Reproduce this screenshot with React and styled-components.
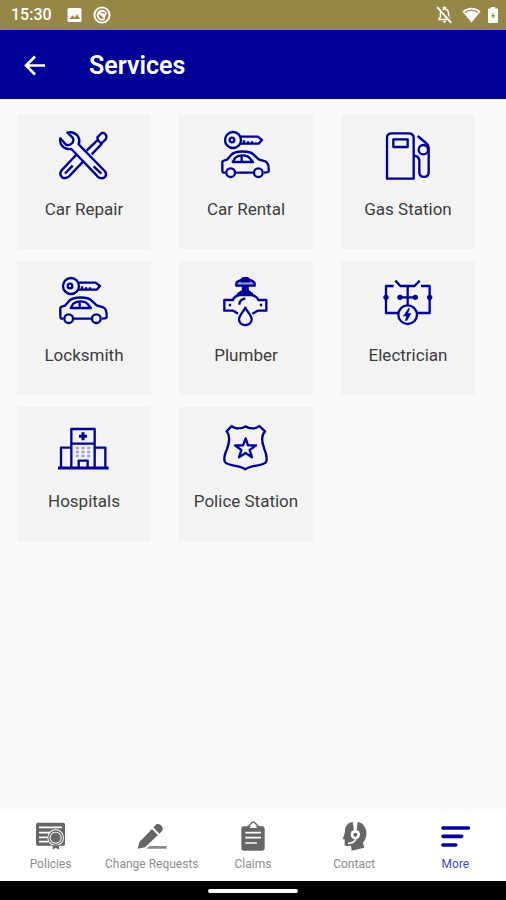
import React from 'react';
import styled, { createGlobalStyle } from 'styled-components';

const NAVY = '#000099';

const services = [
	{ name: 'Car Repair', Icon: RepairIcon },
	{ name: 'Car Rental', Icon: CarKeyIcon },
	{ name: 'Gas Station', Icon: GasIcon },
	{ name: 'Locksmith', Icon: CarKeyIcon },
	{ name: 'Plumber', Icon: PlumberIcon },
	{ name: 'Electrician', Icon: ElectricianIcon },
	{ name: 'Hospitals', Icon: HospitalIcon },
	{ name: 'Police Station', Icon: PoliceIcon },
];

const tabs = [
	{ name: 'Policies', Icon: PoliciesIcon },
	{ name: 'Change Requests', Icon: EditIcon },
	{ name: 'Claims', Icon: ClaimsIcon },
	{ name: 'Contact', Icon: ContactIcon },
	{ name: 'More', Icon: MoreIcon, active: true },
];

export default function App() {
	return (
		<Screen>
			<GlobalStyle />
			<StatusBar>
				<Clock>15:30</Clock>
				<StatusLeft />
				<StatusRight />
			</StatusBar>
			<Header>
				<BackButton aria-label='Back'>
					<svg width='24' height='24' viewBox='0 0 24 24' fill='none' stroke='#fff' strokeWidth='2.6'>
						<path d='M22 11.5H4M12 2.5L3 11.5L12 20.5' />
					</svg>
				</BackButton>
				<Title>Services</Title>
			</Header>
			<Grid>
				{services.map(({ name, Icon }) => (
					<Tile key={name}>
						<Icon />
						<TileLabel>{name}</TileLabel>
					</Tile>
				))}
			</Grid>
			<TabBar>
				{tabs.map(({ name, Icon, active }) => (
					<Tab key={name} href='#' $active={active}>
						<Icon />
						<TabLabel>{name}</TabLabel>
					</Tab>
				))}
			</TabBar>
			<SystemBar>
				<HomePill />
			</SystemBar>
		</Screen>
	);
}

function StatusLeft() {
	return (
		<StatusIcons width='44' height='18' viewBox='0 0 44 18' fill='none'>
			<rect x='0.5' y='2' width='14' height='14' rx='1.6' fill='#fff' />
			<path d='M2.5 13L5.5 9.2L7.6 11.6L10 8.2L13 13Z' fill='#968747' />
			<circle cx='35' cy='9' r='7.6' stroke='#fff' strokeWidth='1.9' />
			<path d='M37.6 12.8A4.4 4.4 0 1 1 39.4 8.6M32 6.8L38 11.8' stroke='#fff' strokeWidth='1.9' />
			<path d='M33 6.2L39 8.2L37.8 11.6Z' fill='#fff' />
		</StatusIcons>
	);
}

function StatusRight() {
	return (
		<StatusIcons $end width='62' height='18' viewBox='0 0 62 18'>
			<path d='M3 13.4V12.4L4.4 11V7.6C4.4 5.2 5.8 3.6 7.6 3.2V1.6H9.4V3.2C11.4 3.6 12.6 5.2 12.6 7.6V11L14 12.4V13.4Z' fill='none' stroke='#fff' strokeWidth='1.5' />
			<path d='M7 15H10C10 17.4 7 17.4 7 15Z' fill='#fff' />
			<path d='M2.4 0.4L16.4 16' stroke='#968747' strokeWidth='2' />
			<path d='M1.2 1.2L15.2 16.8' stroke='#fff' strokeWidth='1.9' />
			<path d='M35.5 16.6L26.4 5.4C31.6 0.6 39.4 0.6 44.6 5.4Z' fill='#fff' />
			<path d='M28.8 6.6C33 3.6 38 3.6 42.2 6.6' fill='none' stroke='#968747' strokeWidth='1.2' />
			<path d='M54.8 2.6V1H59.2V2.6H61C61.6 2.6 62 3 62 3.6V16C62 16.6 61.6 17 61 17H53C52.4 17 52 16.6 52 16V3.6C52 3 52.4 2.6 53 2.6Z' fill='#fff' />
			<path d='M57.4 6L55 10.4H56.8V13.4L59 9H57.4Z' fill='#968747' />
		</StatusIcons>
	);
}

function RepairIcon() {
	return (
		<ServiceIcon viewBox='138 69 168 168'>
			<path d='M230 137L264 104M245 148L276 116M262 97L275 84Q284 82 289 92Q290 98 287 103L276 114Q264 112 262 97Z' />
			<path d='M201 147L154 197C147 207 153 221 167 219C174 218 178 214 182 209L219 170M188 182L165 206' />
			<path d='M172 83C184 80 196 84 204 94C209 102 209 111 206 118L284 198C294 210 284 223 270 219C266 218 262 214 260 211L184 132C170 134 158 127 152 116C150 110 149 104 151 100L168 119C174 122 181 120 187 114C191 108 191 103 188 98Z' />
			<path d='M251 184L274 206' />
		</ServiceIcon>
	);
}

function CarKeyIcon() {
	return (
		<ServiceIcon viewBox='144 69 168 168'>
			<circle cx='189' cy='105' r='24' />
			<circle cx='186' cy='105' r='7' />
			<path d='M212 95H263L276 105L266 116H212M222 115V106M234 115V109M246 115V109' />
			<path d='M166 203H160C157 202 157 199 157 196V170C158 166 164 166 171 164L184 149C196 137 238 136 250 148L266 163L286 169C293 173 297 185 296 199C295 203 290 203 282 203M198 203H249' />
			<path d='M188 171L196 158C208 149 230 149 238 158L249 171ZM215 152V171' />
			<circle cx='182' cy='203' r='13' />
			<circle cx='265' cy='203' r='13' />
		</ServiceIcon>
	);
}

function GasIcon() {
	return (
		<ServiceIcon viewBox='150 69 168 168'>
			<path d='M171 221V98C171 89 176 85 185 85H236C245 85 251 90 251 99V221Z' />
			<rect x='190' y='103' width='43' height='23' />
			<path d='M251 153H257C265 155 268 160 268 169V203C269 220 295 220 296 203V131C296 123 293 117 288 114L263 93' />
			<circle cx='280' cy='134' r='14' />
		</ServiceIcon>
	);
}

function PlumberIcon() {
	return (
		<ServiceIcon viewBox='144 57 168 168'>
			<path d='M199 92V86C199 80 207 77 215 75C218 68 234 68 237 75C246 77 254 80 254 86V92Z' fill='#9a9ad0' />
			<path d='M215 75C218 68 234 68 237 75V79H215ZM219 94H233V107L246 116V120H205V116L219 107Z' fill={NAVY} />
			<path d='M207 120C196 123 191 128 189 135H163V167H187C193 168 197 172 204 176M246 120C257 123 263 128 265 135H289V167H266C260 168 255 172 247 176M208 149C208 139 215 132 226 130M180 146V154M273 146V154' />
			<path d='M226 158C220 171 207 181 207 193C207 216 245 216 245 193C245 181 232 171 226 158Z' fill='#f3f3f3' />
		</ServiceIcon>
	);
}

function ElectricianIcon() {
	return (
		<ServiceIcon viewBox='150 57 168 168'>
			<path d='M191 93H168V174H205M196 77L211 93H254L269 77M273 93H299V174H262M233 93V150M210 127H256' />
			<circle cx='233' cy='179' r='28' />
			<g fill={NAVY} stroke='none'>
				<circle cx='210' cy='127' r='8' />
				<circle cx='256' cy='127' r='8' />
				<circle cx='168' cy='127' r='8' />
				<circle cx='299' cy='127' r='8' />
				<path d='M235 160L219 184H229L225 197H231L244 175H234L240 160Z' />
			</g>
		</ServiceIcon>
	);
}

function HospitalIcon() {
	return (
		<ServiceIcon viewBox='138 60 168 168'>
			<path d='M184 202V87H254V202M184 131H254M184 143H153V202M254 143H286V202M206 202V182H233V202' />
			<path d='M144 204H296' strokeWidth='9' />
			<path d='M219 97V121M207 109H231' strokeWidth='9' />
			<path d='M202 140V176M219 140V176M236 140V176' strokeWidth='9' strokeDasharray='8 4' opacity='0.35' />
		</ServiceIcon>
	);
}

function PoliceIcon() {
	return (
		<ServiceIcon viewBox='144 60 168 168'>
			<path d='M185 78C194 88 215 87 226 79C238 87 258 88 268 78L285 94C272 107 275 126 283 147C288 159 292 173 289 184C282 201 245 192 226 208C208 192 171 201 164 184C161 173 165 159 171 147C179 126 181 107 170 94Z' />
			<path d='M227 115L234 136H258L239 150L246 172L227 159L207 172L214 150L195 136H219Z' />
		</ServiceIcon>
	);
}

function PoliciesIcon() {
	return (
		<TabIcon viewBox='105 60 96 96'>
			<path d='M113 68H190Q195 68 195 73V132Q195 137 190 137H113Q108 137 108 132V73Q108 68 113 68Z' />
			<path d='M117 82H186M117 98H151M117 112H144M117 125H146' stroke='#fff' strokeWidth='5' />
			<circle cx='167' cy='113' r='25' fill='#fff' />
			<circle cx='167' cy='113' r='20' strokeWidth='4' stroke='currentColor' fill='none' />
			<circle cx='167' cy='113' r='15' />
			<path d='M158 136H177V149L167 143L158 149Z' />
		</TabIcon>
	);
}

function EditIcon() {
	return (
		<TabIcon viewBox='408 60 96 96'>
			<path d='M413 146L418 126L456 87L474 105L435 142ZM460 82L469 73Q476 70 482 75L487 81Q491 88 486 93L478 101Z' />
			<path d='M447 138H500V146H440Z' opacity='0.75' />
		</TabIcon>
	);
}

function ClaimsIcon() {
	return (
		<TabIcon viewBox='711 60 96 96'>
			<path d='M731 79H787Q794 79 794 86V145Q794 152 787 152H731Q724 152 724 145V86Q724 79 731 79Z' />
			<path d='M742 82L757 67Q760 65 763 67L778 82' fill='none' stroke='currentColor' strokeWidth='4' />
			<path d='M748 84L760 73L772 84Z' fill='#fff' />
			<path d='M736 98H783M736 113H783M736 129H771' stroke='#fff' strokeWidth='5' />
		</TabIcon>
	);
}

function ContactIcon() {
	return (
		<TabIcon viewBox='256 60 96 96'>
			<path d='M300 66C284 68 276 80 277 96L270 118H276V134Q277 139 283 138L295 137L297 152L335 143L331 128C341 117 344 101 339 87C334 73 324 67 315 66L312 90H305Z' />
			<circle cx='308' cy='104' r='14' fill='#fff' />
			<circle cx='308' cy='104' r='6' />
			<path d='M309 117C306 127 298 130 286 130' fill='none' stroke='#fff' strokeWidth='5' />
			<path d='M306 66V92' stroke='#fff' strokeWidth='6' />
		</TabIcon>
	);
}

function MoreIcon() {
	return (
		<TabIcon viewBox='559 60 96 96'>
			<path d='M571 84H647M571 109H627M571 135H609' stroke='currentColor' strokeWidth='11' strokeLinecap='round' />
		</TabIcon>
	);
}

const GlobalStyle = createGlobalStyle`
	* {
		box-sizing: border-box;
	}
	body {
		margin: 0;
		font-family: Roboto, 'Liberation Sans', sans-serif;
		background: #fafafa;
	}
`;

const Screen = styled.div`
	min-height: 100vh;
	display: flex;
	flex-direction: column;
`;

const StatusBar = styled.div`
	height: 30px;
	padding: 0 8px 0 11px;
	display: flex;
	align-items: center;
	background: #968747;
	color: white;
`;

const Clock = styled.span`
	font-size: 16px;
	font-weight: 500;
	line-height: 20px;
	margin-right: 15px;
`;

const StatusIcons = styled.svg`
	flex: none;
	margin-left: ${({ $end }) => ($end ? 'auto' : '0')};
`;

const Header = styled.header`
	height: 69px;
	padding: 2px 20px 0;
	display: flex;
	align-items: center;
	gap: 39px;
	background: ${NAVY};
	color: white;
`;

const BackButton = styled.button`
	display: flex;
	padding: 3px;
	border: none;
	background: transparent;
	cursor: pointer;
`;

const Title = styled.h1`
	margin: 0;
	font-size: 25px;
	font-weight: 600;
	line-height: 32px;
`;

const Grid = styled.main`
	flex: 1;
	padding: 16px 31px 16px 17px;
	display: grid;
	grid-template-columns: repeat(3, 1fr);
	gap: 12px 28px;
	align-content: start;
`;

const Tile = styled.button`
	aspect-ratio: 1;
	padding: 13px 0 0;
	display: flex;
	flex-direction: column;
	align-items: center;
	gap: 13px;
	border: none;
	background: #f3f3f3;
	font-family: inherit;
	cursor: pointer;
`;

const TileLabel = styled.span`
	color: #3c3c3c;
	font-size: 17px;
	line-height: 24px;
	white-space: nowrap;
`;

const ServiceIcon = styled.svg`
	width: 56px;
	height: 56px;
	fill: none;
	stroke: ${NAVY};
	stroke-width: 7;
	stroke-linejoin: round;
`;

const TabBar = styled.nav`
	height: 69px;
	padding-top: 8px;
	display: grid;
	grid-template-columns: repeat(5, 1fr);
	background: white;
`;

const Tab = styled.a`
	display: flex;
	flex-direction: column;
	align-items: center;
	gap: 4px;
	color: ${({ $active }) => ($active ? NAVY : '#666')};
	text-decoration: none;
`;

const TabLabel = styled.span`
	font-size: 12px;
	line-height: 16px;
	white-space: nowrap;
	opacity: 0.75;
`;

const TabIcon = styled.svg`
	width: 32px;
	height: 32px;
	fill: currentColor;
`;

const SystemBar = styled.div`
	height: 19px;
	padding-top: 1px;
	display: flex;
	align-items: center;
	justify-content: center;
	background: black;
`;

const HomePill = styled.span`
	width: 90px;
	height: 4px;
	border-radius: 2px;
	background: white;
`;
